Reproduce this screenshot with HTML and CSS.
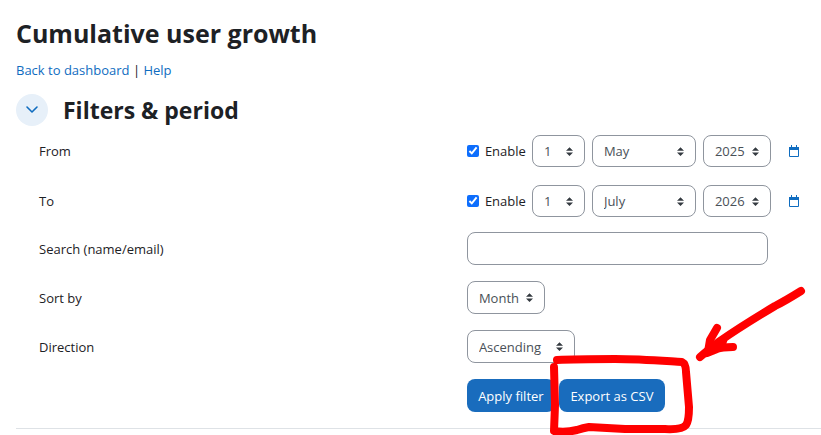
FILE: index.html
```html
<!DOCTYPE html>
<html lang="en">
<head>
    <meta charset="UTF-8">
    <meta name="viewport" content="width=device-width, initial-scale=1.0">
    <title>Cumulative user growth</title>
    <link rel="stylesheet" href="styles.css">
</head>
<body>
    <main class="page">
        <h1>Cumulative user growth</h1>
        <nav class="links"><a href="#">Back to dashboard</a> | <a href="#">Help</a></nav>

        <form class="filters">
            <div class="section-head">
                <button type="button" class="toggle" aria-label="Collapse filters">
                    <svg width="14" height="10" viewBox="0 0 14 10"><path d="M2 2l5 5 5-5" fill="none" stroke="currentColor" stroke-width="1.600" stroke-linecap="round" stroke-linejoin="round"/></svg>
                </button>
                <h2>Filters &amp; period</h2>
            </div>

            <div class="row row-date">
                <span class="label">From</span>
                <div class="controls">
                    <label class="enable"><input type="checkbox" checked> Enable</label>
                    <select class="day" aria-label="From day"><option>1</option></select>
                    <select class="month" aria-label="From month"><option>May</option></select>
                    <select class="year" aria-label="From year"><option>2025</option></select>
                    <a href="#" class="calendar" aria-label="Calendar">
                        <svg width="12" height="12" viewBox="0 0 12 12"><path d="M3.500 0v3M8.500 0v3" stroke="currentColor" stroke-width="1"/><path d="M1.500 2.500h9v9h-9z" fill="none" stroke="currentColor" stroke-width="1"/><path d="M1 2h10v3H1z" fill="currentColor"/></svg>
                    </a>
                </div>
            </div>

            <div class="row row-date">
                <span class="label">To</span>
                <div class="controls">
                    <label class="enable"><input type="checkbox" checked> Enable</label>
                    <select class="day" aria-label="To day"><option>1</option></select>
                    <select class="month" aria-label="To month"><option>July</option></select>
                    <select class="year" aria-label="To year"><option>2026</option></select>
                    <a href="#" class="calendar" aria-label="Calendar">
                        <svg width="12" height="12" viewBox="0 0 12 12"><path d="M3.500 0v3M8.500 0v3" stroke="currentColor" stroke-width="1"/><path d="M1.500 2.500h9v9h-9z" fill="none" stroke="currentColor" stroke-width="1"/><path d="M1 2h10v3H1z" fill="currentColor"/></svg>
                    </a>
                </div>
            </div>

            <div class="row">
                <label class="label" for="search">Search (name/email)</label>
                <div class="controls"><input type="text" id="search" class="search"></div>
            </div>

            <div class="row">
                <label class="label" for="sort">Sort by</label>
                <div class="controls"><select id="sort" class="sort"><option>Month</option></select></div>
            </div>

            <div class="row">
                <label class="label" for="direction">Direction</label>
                <div class="controls"><select id="direction" class="direction"><option>Ascending</option></select></div>
            </div>

            <div class="row row-buttons">
                <div class="controls buttons">
                    <button type="submit" class="btn apply">Apply filter</button>
                    <button type="button" class="btn export">Export as CSV</button>
                    <!-- hand-drawn marker around the export button -->
                    <svg class="marker" width="276" height="155" viewBox="0 0 276 155" aria-hidden="true">
                        <path d="M12 80C30 79 52 79 70 79C95 79 120 81 137 82Q141 84 141 92L144 127Q144 141 141 145Q137 150 120 149L80 149L44 147Q38 148 32 150Q20 153 9 151L10 125L9 87"/>
                        <path d="M256 11Q240 21 230 26Q195 47 175 61Q163 70 155 77"/>
                        <path d="M172 48L165 60L163 72"/>
                        <path d="M188 67Q176 67 172 69L162 73L178 61"/>
                    </svg>
                </div>
            </div>
        </form>
        <hr>
    </main>
</body>
</html>
```
FILE: styles.css
```css
* {
    box-sizing: border-box;
}

body {
    margin: 0;
    background: #fff;
    color: #1d2125;
    font-family: "Segoe UI", "Open Sans", "Noto Sans", sans-serif;
    font-size: 13px;
    line-height: 20px;
}

.page {
    padding: 16px 0 6px 16px;
}

h1 {
    margin: 0;
    font-size: 25px;
    line-height: 34px;
}

h2 {
    margin: 0;
    font-size: 23px;
    line-height: 32px;
}

a {
    color: #0f6cbf;
    text-decoration: none;
}

.links {
    margin-top: 10px;
}

.section-head {
    display: flex;
    align-items: center;
    gap: 15px;
    margin-top: 14px;
}

.toggle {
    display: flex;
    align-items: center;
    justify-content: center;
    width: 32px;
    height: 32px;
    padding: 0;
    border: none;
    border-radius: 50%;
    background: #e7f0f9;
    color: #0f6cbf;
}

.filters {
    display: flex;
    flex-direction: column;
}

.row {
    display: grid;
    grid-template-columns: 11fr 9fr;
    align-items: center;
    margin-bottom: 16px;
    padding: 0 4px 0 23px;
}

.row-date {
    margin: 9px 0;
}

.row-date + .row-date {
    margin-bottom: 15px;
}

.controls {
    display: flex;
    align-items: center;
}

.enable {
    display: flex;
    align-items: center;
    gap: 6px;
    width: 65px;
}

.enable input {
    width: 12px;
    height: 12px;
    margin: 0;
    accent-color: #0d6efd;
}

select,
.search {
    height: 33px;
    padding: 0 11px;
    border: 1px solid #8f959e;
    border-radius: 8px;
    background-color: #fff;
    color: #495057;
    font: inherit;
}

select {
    appearance: none;
    background-image: url("data:image/svg+xml,%3Csvg xmlns='http://www.w3.org/2000/svg' viewBox='0 0 4 5'%3E%3Cpath fill='%23343a40' d='M2 0L0 2h4zm0 5L0 3h4z'/%3E%3C/svg%3E");
    background-repeat: no-repeat;
    background-position: right 11px center;
    background-size: 7px 9px;
}

.row-date select {
    height: 32px;
    margin-right: 7px;
}

.day {
    width: 53px;
}

.month {
    width: 104px;
}

.year {
    width: 68px;
}

.calendar {
    display: flex;
    margin-left: 10px;
}

.search {
    width: 100%;
    max-width: 301px;
}

.sort {
    width: 78px;
}

.direction {
    width: 108px;
}

.row-buttons {
    margin-bottom: 0;
}

.buttons {
    position: relative;
    grid-column: 2;
    gap: 4px;
}

.btn {
    height: 33px;
    padding: 0;
    border: none;
    border-radius: 8px;
    background: #196cbd;
    color: #fff;
    font: inherit;
    white-space: nowrap;
}

.apply {
    width: 88px;
}

.export {
    width: 106px;
}

.marker {
    position: absolute;
    top: -99px;
    left: 78px;
    fill: none;
    stroke: #f00;
    stroke-width: 8px;
    stroke-linecap: round;
    stroke-linejoin: round;
    pointer-events: none;
}

hr {
    margin: 16px 0 0;
    border: none;
    border-top: 1px solid #dee2e6;
}
```
